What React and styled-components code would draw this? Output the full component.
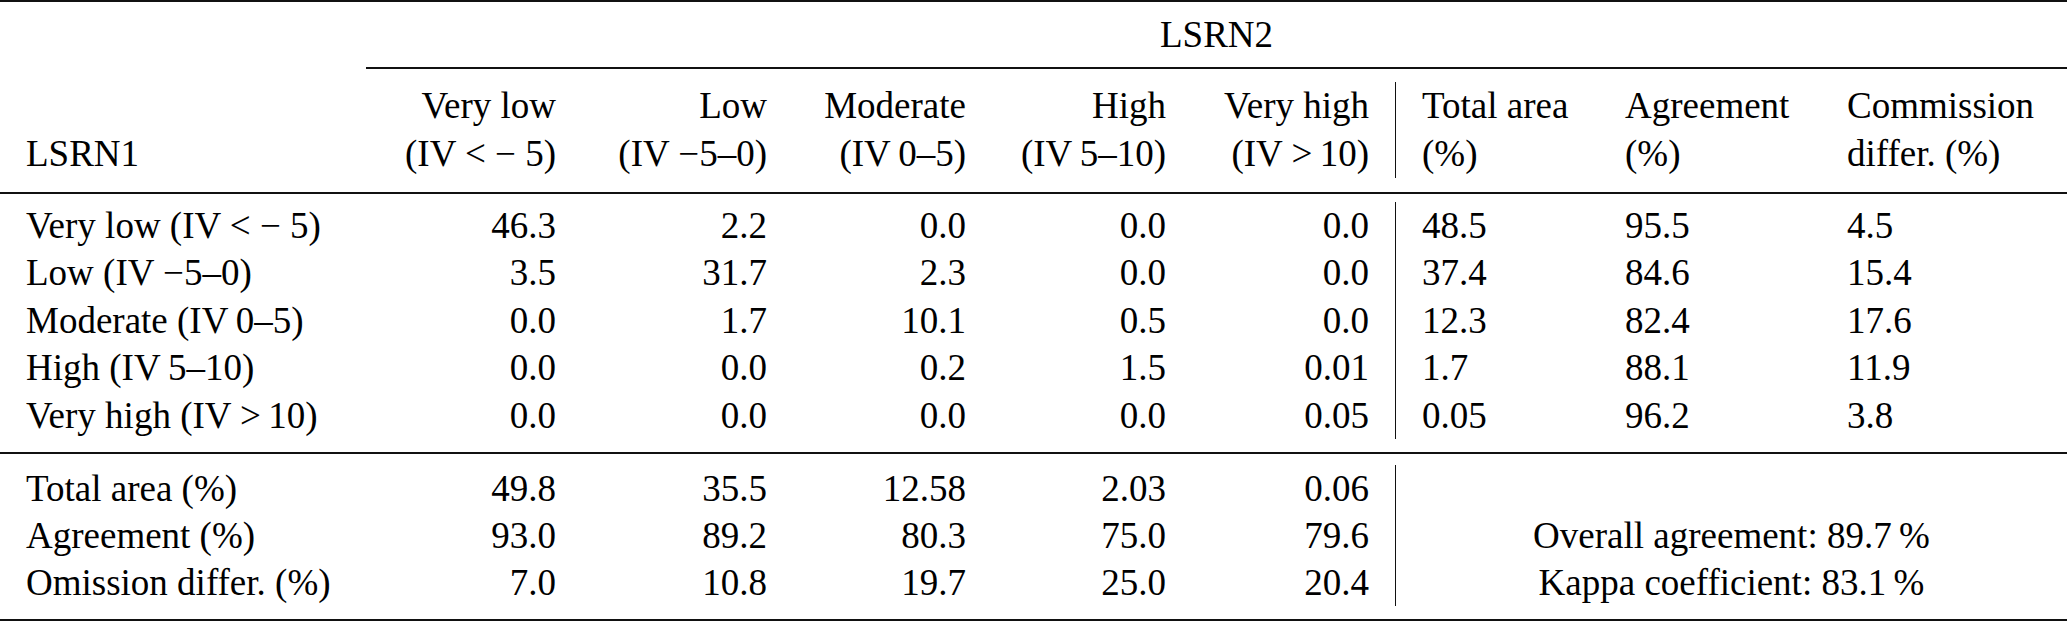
import React from "react";
import styled, { createGlobalStyle } from "styled-components";

const COLS = "366px 216px 211px 199px 200px 203px 204px 222px 246px";

const GlobalStyle = createGlobalStyle`
  html, body {
    margin: 0;
    padding: 0;
    background: #fff;
    overflow: hidden;
  }
`;

const Table = styled.div`
  width: 2067px;
  font-family: "Liberation Serif", "Times New Roman", serif;
  font-size: 37px;
  color: #000;
`;

const Rule = styled.div`
  height: ${(p) => p.$weight}px;
  background: #111;
  margin-left: ${(p) => p.$indent || 0}px;
`;

const SpanRow = styled.div`
  margin: 9px 0 8.5px;
  padding-left: 366px;
  line-height: 47.5px;
  text-align: center;
`;

const Grid = styled.div`
  display: grid;
  grid-template-columns: ${COLS};
  line-height: ${(p) => p.$lh}px;
  margin: ${(p) => p.$margin};
`;

const Cell = styled.div`
  padding: 0 26px;
  text-align: ${(p) => p.$align || "left"};
  white-space: nowrap;
  border-left: ${(p) => (p.$divider ? "1.5px solid #111" : "none")};
  align-self: ${(p) => (p.$bottom ? "end" : "stretch")};
  grid-column: ${(p) => p.$span || "auto"};
`;

const heads = [
  ["Very low", "(IV < \u2212 5)"],
  ["Low", "(IV \u22125\u20130)"],
  ["Moderate", "(IV\u20090\u20135)"],
  ["High", "(IV\u20095\u201310)"],
  ["Very high", "(IV >\u200910)"],
];

const rightHeads = [
  ["Total area", "(%)"],
  ["Agreement", "(%)"],
  ["Commission", "differ. (%)"],
];

const rows = [
  ["Very low (IV < \u2212 5)", "46.3", "2.2", "0.0", "0.0", "0.0", "48.5", "95.5", "4.5"],
  ["Low (IV \u22125\u20130)", "3.5", "31.7", "2.3", "0.0", "0.0", "37.4", "84.6", "15.4"],
  ["Moderate (IV\u20090\u20135)", "0.0", "1.7", "10.1", "0.5", "0.0", "12.3", "82.4", "17.6"],
  ["High (IV\u20095\u201310)", "0.0", "0.0", "0.2", "1.5", "0.01", "1.7", "88.1", "11.9"],
  ["Very high (IV >\u200910)", "0.0", "0.0", "0.0", "0.0", "0.05", "0.05", "96.2", "3.8"],
];

const totals = [
  ["Total area (%)", "49.8", "35.5", "12.58", "2.03", "0.06", ""],
  ["Agreement (%)", "93.0", "89.2", "80.3", "75.0", "79.6", "Overall agreement: 89.7\u2009%"],
  ["Omission differ. (%)", "7.0", "10.8", "19.7", "25.0", "20.4", "Kappa coefficient: 83.1\u2009%"],
];

const App = () => (
  <>
    <GlobalStyle />
    <Table>
      <Rule $weight={2} />
      <SpanRow>LSRN2</SpanRow>
      <Rule $weight={1.5} $indent={366} />

      <Grid $lh={48} $margin="13px 0 14px">
        <Cell $bottom>LSRN1</Cell>
        {heads.map(([a, b]) => (
          <Cell key={a} $align="right">
            {a}
            <br />
            {b}
          </Cell>
        ))}
        {rightHeads.map(([a, b], i) => (
          <Cell key={a} $divider={i === 0}>
            {a}
            <br />
            {b}
          </Cell>
        ))}
      </Grid>
      <Rule $weight={2} />

      <Grid $lh={47.5} $margin="8px 0 13px">
        {rows.map((r) =>
          r.map((v, i) => (
            <Cell
              key={r[0] + i}
              $align={i >= 1 && i <= 5 ? "right" : "left"}
              $divider={i === 6}
            >
              {v}
            </Cell>
          ))
        )}
      </Grid>
      <Rule $weight={2} />

      <Grid $lh={47} $margin="11px 0 13px">
        {totals.map((r) =>
          r.map((v, i) => (
            <Cell
              key={r[0] + i}
              $align={i === 0 ? "left" : i === 6 ? "center" : "right"}
              $divider={i === 6}
              $span={i === 6 ? "7 / 10" : "auto"}
            >
              {v}
            </Cell>
          ))
        )}
      </Grid>
      <Rule $weight={2} />
    </Table>
  </>
);

export default App;
